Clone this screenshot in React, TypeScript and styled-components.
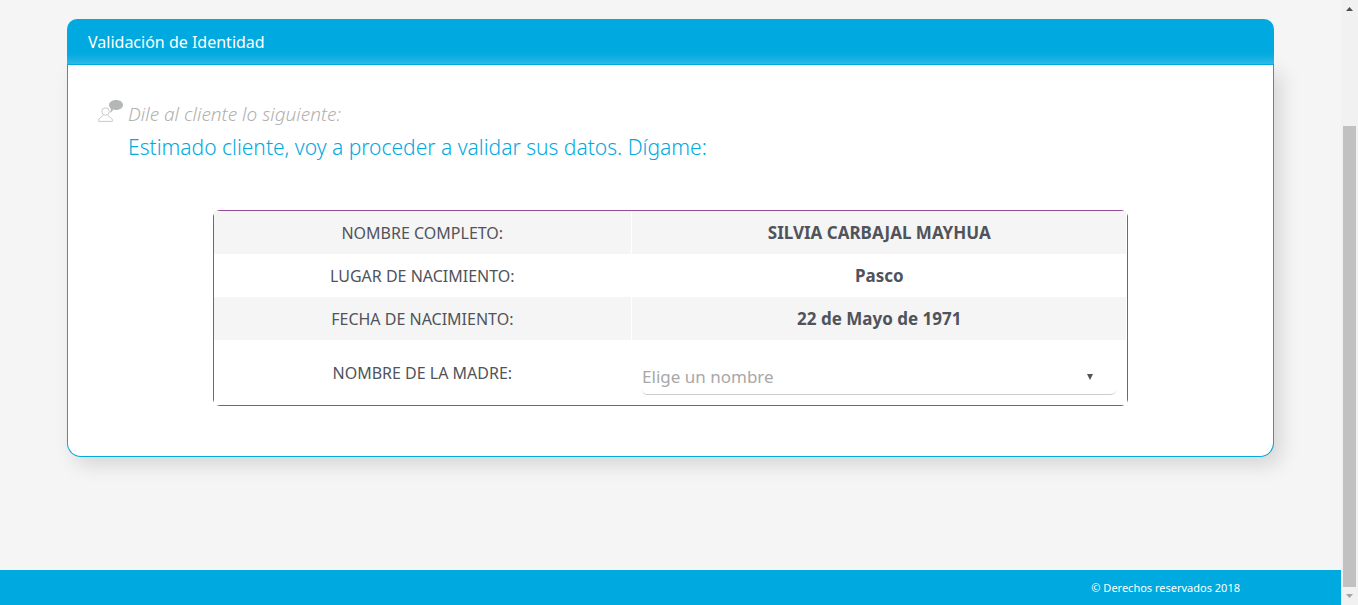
import React from "react";
import styled, { createGlobalStyle } from "styled-components";

const blue = "#00a9e0";

const GlobalStyle = createGlobalStyle`
  * { box-sizing: border-box; }
  body {
    margin: 0;
    background: #f5f5f5;
    color: #50535a;
    font-family: "Noto Sans", "Open Sans", sans-serif;
  }
`;

const Shell = styled.div`
  display: flex;
  min-height: 100vh;
`;

const Page = styled.div`
  flex: 1;
  min-width: 0;
  display: flex;
  flex-direction: column;
`;

const Main = styled.main`
  flex: 1;
  width: 90%;
  margin: 0 auto;
  padding: 19px 0 40px;
`;

const CardHeader = styled.header`
  position: relative;
  padding: 1px 21px 0;
  border-bottom: 1px solid ${blue};
  border-radius: 10px 10px 0 0;
  background: ${blue};
  box-shadow: inset 0 -12px 12px -10px rgba(255, 255, 255, 0.3);
`;

const CardTitle = styled.h1`
  margin: 0;
  color: #fff;
  font-size: 16px;
  font-weight: 400;
  line-height: 44px;
`;

const CardBody = styled.section`
  padding: 35px 30px 50px;
  border: 1px solid ${blue};
  border-top: 0;
  border-radius: 0 0 14px 14px;
  background: #fff;
  box-shadow: 7px 8px 20px rgba(0, 0, 0, 0.13);
`;

const Script = styled.div`
  display: grid;
  grid-template-columns: 30px 1fr;
  margin-bottom: 44px;
`;

const Hint = styled.p`
  margin: 0;
  color: #b0b0b0;
  font-size: 19px;
  font-style: italic;
  font-weight: 340;
  line-height: 29px;
`;

const Speech = styled.p`
  grid-column: 2;
  margin: 0;
  color: ${blue};
  font-size: 21px;
  font-weight: 340;
  line-height: 37px;
`;

const TableFrame = styled.div`
  width: 80%;
  margin: 0 auto;
  border: 1px solid #954b97;
  border-radius: 7px;
`;

const DataTable = styled.table`
  width: 100%;
  table-layout: fixed;
  border-collapse: separate;
  border-spacing: 0;
  font-size: 16px;
  line-height: 23px;
  text-align: center;
`;

const Row = styled.tr<{ $striped?: boolean }>`
  background: ${(p) => (p.$striped ? "#f5f5f5" : "#fff")};
`;

const Label = styled.th`
  width: 45.8%;
  padding: 11px 10px 9px;
  border-right: 1px solid #fff;
  font-weight: 400;
`;

const Value = styled.td`
  padding: 10px;
  border-right: 1px solid #fff;
  font-size: 17px;
  font-weight: 700;
`;

const SelectBox = styled.div`
  position: relative;
  display: flex;

  svg {
    position: absolute;
    right: 23px;
    top: 24px;
    pointer-events: none;
  }
`;

const Select = styled.select`
  width: 100%;
  height: 45px;
  padding: 9px 40px 0 0;
  border: solid transparent;
  border-width: 0 0 1px;
  border-bottom-color: #ccc;
  border-radius: 5px;
  outline: none;
  appearance: none;
  background: transparent;
  color: #a8a8a8;
  font: inherit;
  font-weight: 400;
`;

const Footer = styled.footer`
  padding: 0 101px 0 20px;
  background: ${blue};
  color: #fff;
  font-size: 11px;
  line-height: 35px;
  text-align: right;
`;

const ScrollTrack = styled.div`
  flex: none;
  width: 17px;
  display: flex;
  flex-direction: column;
  align-items: center;
  background: #f1f1f1;
`;

const ScrollEnd = styled.span`
  display: flex;
  align-items: center;
  justify-content: center;
  height: 18px;
`;

const ScrollSpace = styled.div`
  flex: 108;
`;

const ScrollThumb = styled.div`
  flex: 461;
  width: 13px;
  background: #c1c1c1;
`;

const rows = [
  { label: "NOMBRE COMPLETO:", value: "SILVIA CARBAJAL MAYHUA" },
  { label: "LUGAR DE NACIMIENTO:", value: "Pasco" },
  { label: "FECHA DE NACIMIENTO:", value: "22 de Mayo de 1971" },
];

const SpeakerIcon = () => (
  <svg width="26" height="24" viewBox="0 0 26 24" aria-hidden="true">
    <g fill="none" stroke="#c9c9c9">
      <circle cx="7.5" cy="11.5" r="3.7" />
      <path d="M.6 21.4v-1.2c0-2 2.200-2.600 4.600-4.700M9.800 15.500c2.400 2.100 4.600 2.700 4.600 4.700v1.200H.600" />
    </g>
    <path
      fill="#b5b7b6"
      d="M18.200 0c4 0 6.800 2.200 6.800 5s-3 5-7 5c-1 0-2-.1-2.800-.4-.6 1.400-1.800 2.600-3.400 3.200.8-1.200 1.200-2.800 1-4.200-1.100-.9-1.800-2.200-1.800-3.600 0-2.800 3-5 7.200-5z"
    />
  </svg>
);

export default function App() {
  return (
    <>
      <GlobalStyle />
      <Shell>
        <Page>
          <Main>
            <CardHeader>
              <CardTitle>Validación de Identidad</CardTitle>
            </CardHeader>
            <CardBody>
              <Script>
                <SpeakerIcon />
                <Hint>Dile al cliente lo siguiente:</Hint>
                <Speech>Estimado cliente, voy a proceder a validar sus datos. Dígame:</Speech>
              </Script>
              <TableFrame>
                <DataTable>
                  <tbody>
                    {rows.map((row, i) => (
                      <Row key={row.label} $striped={i % 2 === 0}>
                        <Label scope="row">{row.label}</Label>
                        <Value>{row.value}</Value>
                      </Row>
                    ))}
                    <Row>
                      <Label scope="row">
                        <label htmlFor="mother">NOMBRE DE LA MADRE:</label>
                      </Label>
                      <Value>
                        <SelectBox>
                          <Select id="mother" defaultValue="">
                            <option value="">Elige un nombre</option>
                          </Select>
                          <svg width="6" height="6" viewBox="0 0 6 6" aria-hidden="true">
                            <path d="M0 0h6L3 6z" fill="#50535a" />
                          </svg>
                        </SelectBox>
                      </Value>
                    </Row>
                  </tbody>
                </DataTable>
              </TableFrame>
            </CardBody>
          </Main>
          <Footer>© Derechos reservados 2018</Footer>
        </Page>
        <ScrollTrack aria-hidden="true">
          <ScrollEnd>
            <svg width="7" height="4" viewBox="0 0 7 4">
              <path d="M0 4 3.500 0 7 4z" fill="#505050" />
            </svg>
          </ScrollEnd>
          <ScrollSpace />
          <ScrollThumb />
          <ScrollEnd>
            <svg width="7" height="4" viewBox="0 0 7 4">
              <path d="M0 0h7L3.500 4z" fill="#a3a3a3" />
            </svg>
          </ScrollEnd>
        </ScrollTrack>
      </Shell>
    </>
  );
}
